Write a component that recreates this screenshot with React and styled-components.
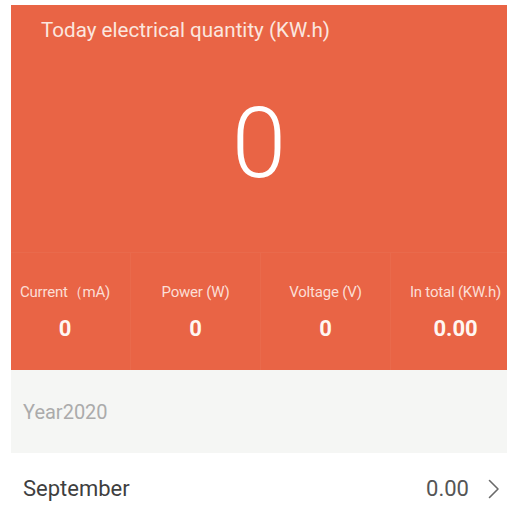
import React from "react";
import styled, { createGlobalStyle } from "styled-components";

const Global = createGlobalStyle`
  html, body { margin: 0; padding: 0; background: #ffffff; }
  body { font-family: Roboto, "Noto Sans", "Liberation Sans", sans-serif; }
`;

const Page = styled.div`
  width: 516px;
  height: 508px;
  overflow: hidden;
  padding: 5px 9px 0 11px;
  box-sizing: border-box;
  display: flex;
  flex-direction: column;
  & > * { flex: none; }
`;

const Panel = styled.section`
  background: #e96445;
  display: flex;
  flex-direction: column;
  overflow: hidden;
  & > * { flex: none; }
`;

const Title = styled.div`
  padding: 13px 0 0 30px;
  font-size: 20.6px;
  line-height: 24px;
  color: #fbe6df;
`;

const BigValue = styled.div`
  margin-top: 53px;
  text-align: center;
  font-size: 98px;
  font-weight: 300;
  line-height: 98px;
  color: #ffffff;
`;

const Stats = styled.div`
  margin-top: 59px;
  margin-left: -11px;
  display: grid;
  grid-template-columns: repeat(4, 130px);
  border-top: 1px solid rgba(255, 255, 255, 0.04);
  height: 117px;
`;

const Stat = styled.div`
  display: flex;
  flex-direction: column;
  align-items: center;
  padding-top: 29px;
  white-space: nowrap;
  border-left: ${(p) => (p.$first ? "none" : "1px solid rgba(255,255,255,0.04)")};
`;

const StatLabel = styled.div`
  font-size: 15px;
  line-height: 20px;
  color: rgba(255, 240, 235, 0.88);
  letter-spacing: -0.2px;
`;

const StatValue = styled.div`
  margin-top: 14px;
  font-size: 22px;
  line-height: 26px;
  font-weight: 700;
  color: #fff6f2;
`;

const YearBar = styled.div`
  height: 83px;
  background: #f5f6f4;
  display: flex;
  align-items: center;
  padding-left: 12px;
  font-size: 20px;
  line-height: 24px;
  color: #ababab;
`;

const MonthRow = styled.div`
  height: 71px;
  display: flex;
  align-items: center;
  padding: 0 6px 0 12px;
  font-size: 22px;
  line-height: 26px;
  color: #3f3f3f;
`;

const MonthName = styled.div`
  flex: 1;
`;

const MonthValue = styled.div`
  color: #555555;
`;

const Chevron = styled.svg`
  margin-left: 18px;
  width: 14px;
  height: 20px;
  flex: none;
`;

const stats = [
  { label: "Current（mA)", value: "0" },
  { label: "Power (W)", value: "0" },
  { label: "Voltage (V)", value: "0" },
  { label: "In total (KW.h)", value: "0.00" },
];

export default function App() {
  return (
    <>
      <Global />
      <Page>
        <Panel>
          <Title>Today electrical quantity (KW.h)</Title>
          <BigValue>0</BigValue>
          <Stats>
            {stats.map((s, i) => (
              <Stat key={s.label} $first={i === 0}>
                <StatLabel>{s.label}</StatLabel>
                <StatValue>{s.value}</StatValue>
              </Stat>
            ))}
          </Stats>
        </Panel>
        <YearBar>Year2020</YearBar>
        <MonthRow>
          <MonthName>September</MonthName>
          <MonthValue>0.00</MonthValue>
          <Chevron viewBox="0 0 14 20">
            <path d="M2.5 1.5 L11 10 L2.5 18.5" fill="none" stroke="#6a6a6a" strokeWidth="1.6" strokeLinecap="round" strokeLinejoin="round" />
          </Chevron>
        </MonthRow>
      </Page>
    </>
  );
}
